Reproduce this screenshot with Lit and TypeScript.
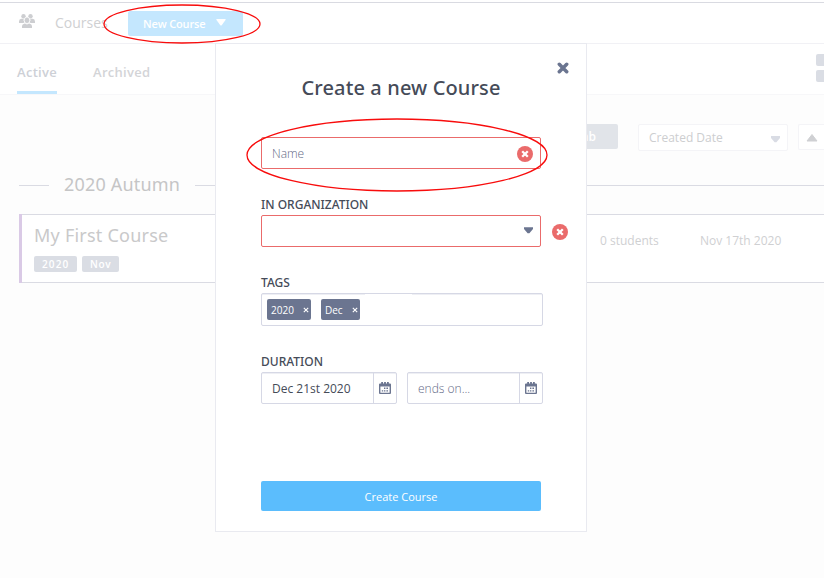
import { LitElement, html, css, svg } from "lit";
import { customElement } from "lit/decorators.js";

const cross = svg`<path d="M2.3 2.3L9.7 9.7M9.7 2.3L2.3 9.7" stroke="currentColor" stroke-width="3.5" stroke-linecap="round" fill="none"/>`;

@customElement("error-badge")
class ErrorBadge extends LitElement {
  static styles = css`
    :host { display: block; width: 16px; height: 16px; flex: none; }
    svg { display: block; }
  `;
  render() {
    return html`<svg width="16" height="16" viewBox="0 0 16 16">
      <circle cx="8" cy="8" r="8" fill="#ea6b6b" />
      <path d="M5.2 5.2L10.8 10.8M10.8 5.2L5.2 10.8" stroke="#fff" stroke-width="2.3" stroke-linecap="butt" />
    </svg>`;
  }
}

@customElement("calendar-icon")
class CalendarIcon extends LitElement {
  static styles = css`
    :host { display: block; width: 12px; height: 12px; }
    svg { display: block; }
  `;
  render() {
    return html`<svg width="12" height="12" viewBox="0 0 12 12">
      <path fill="#6b7590" fill-rule="evenodd" d="M1 1.5H2.2V0H4V1.5H5.1V0H6.9V1.5H8V0H9.8V1.5H11Q12 1.5 12 2.5V11Q12 12 11 12H1Q0 12 0 11V2.5Q0 1.5 1 1.5ZM1.4 4.6V10.7H10.6V4.6Z" />
      <path fill="#6b7590" d="M5 5.6H6.4V7H5ZM7.4 5.6H9V7H7.4ZM2.8 8.2H4.2V9.6H2.8ZM5 8.2H6.4V9.6H5ZM7.4 8.2H9V9.6H7.4Z" />
    </svg>`;
  }
}

@customElement("course-dialog")
class CourseDialog extends LitElement {
  static styles = css`
    :host {
      display: block; box-sizing: border-box; width: 372px; height: 489px;
      background: #fff; border: 1px solid #e9eaf0; padding: 0 45px;
      color: #454b58; font-family: "Open Sans", sans-serif;
    }
    .close { position: absolute; right: 17px; top: 18px; color: #6b7590; }
    .close svg { display: block; }
    h1 { margin: 0; padding-top: 29px; height: 64px; text-align: center; letter-spacing: .12px;
      font: 500 20px/30px "Noto Sans", sans-serif; color: #454b58; width: 280px; }
    .field { box-sizing: border-box; display: flex; flex: none; align-items: center; height: 32px; width: 280px;
      border: 1px solid #ea6b6b; border-radius: 2px; background: #fff; padding: 0 7px 0 10px; justify-content: space-between; }
    .ph { font-size: 12px; font-weight: 300; color: #5f6986; }
    .field .ph { padding-top: 1px; }
    .field error-badge { margin-top: 2px; }
    .label { font: 500 12px/16px "Noto Sans", sans-serif; height: 18px; color: #454b58; }
    .org { margin-top: 28px; }
    .row { display: flex; align-items: center; gap: 11px; }
    .row error-badge { margin-top: 2px; }
    .select { justify-content: flex-end; }
    .select svg { margin-top: -2px; }
    .tags { margin-top: 28px; }
    .taglist { position: relative; box-sizing: border-box; width: 282px; height: 33px; border: 1px solid #d6d8e5; border-radius: 2px;
      display: flex; align-items: center; gap: 10px; padding-left: 5px; box-shadow: inset 0 1px 0 #eeeff4; }
    .taglist::after { content: ""; position: absolute; left: 103px; top: 0; width: 47px; height: 1px; background: #fff; }
    .tag { box-sizing: border-box; display: flex; justify-content: space-between; align-items: center; height: 21px;
      padding: 0 2px 0 4px; border-radius: 2px; background: #6b7590; color: #fff; font-size: 10px; font-weight: 500; width: 44px; }
    .tag span { padding-top: 1px; }
    .tag.short { width: 39px; }
    .tag svg { display: block; }
    .duration { margin-top: 28px; }
    .dates { display: flex; gap: 10px; }
    .date { box-sizing: border-box; flex: none; width: 136px; height: 32px; display: flex; border: 1px solid #d6d8e5; border-radius: 2px; box-shadow: inset 0 1px 0 #eeeff4; }
    .value { flex: 1; padding-left: 10px; line-height: 31px; font-size: 12px; color: #454b58; }
    .value.ph { font-weight: 300; color: #5f6986; }
    .cal { width: 22px; border-left: 1px solid #d6d8e5; display: flex; justify-content: center; align-items: center; }
    .submit { margin-top: 77px; width: 280px; height: 30px; line-height: 31px; border-radius: 2px; background: #5bbdfd;
      color: #fff; text-align: center; font-size: 11px; font-weight: 500; }
  `;
  render() {
    const x = svg`<path d="M.8 .8L5.2 5.2M5.2 .8L.8 5.2" stroke="#fff" stroke-width="1.1"/>`;
    return html`
      <div class="close"><svg width="12" height="12" viewBox="0 0 12 12">${cross}</svg></div>
      <h1>Create a new Course</h1>
      <div class="field"><span class="ph">Name</span><error-badge></error-badge></div>
      <div class="label org">IN ORGANIZATION</div>
      <div class="row">
        <div class="field select"><svg width="9" height="7" viewBox="0 0 9 7"><path d="M0 .3H9V2L5.4 6.3H3.6L0 2Z" fill="#6b7590"/></svg></div>
        <error-badge></error-badge>
      </div>
      <div class="label tags">TAGS</div>
      <div class="taglist">
        <div class="tag"><span>2020</span><svg width="6" height="6">${x}</svg></div>
        <div class="tag short"><span>Dec</span><svg width="6" height="6">${x}</svg></div>
      </div>
      <div class="label duration">DURATION</div>
      <div class="dates">
        <div class="date"><span class="value">Dec 21st 2020</span><span class="cal"><calendar-icon></calendar-icon></span></div>
        <div class="date"><span class="value ph">ends on...</span><span class="cal"><calendar-icon></calendar-icon></span></div>
      </div>
      <div class="submit">Create Course</div>
    `;
  }
}

@customElement("app-root")
class AppRoot extends LitElement {
  static styles = css`
    :host { display: block; position: relative; width: 824px; height: 578px; overflow: hidden; background: #fdfdfd;
      font-family: "Open Sans", sans-serif; color: #c9cacd; }
    * { box-sizing: border-box; }
    .strip { height: 3px; border-bottom: 1px solid #d9dae1; background: #fff; }
    .top { height: 41px; background: #fff; border-bottom: 1px solid #f1f1f5; display: flex; align-items: flex-start; padding: 0 0 0 19px; }
    .people { margin-top: 11px; display: block; }
    .crumb { margin: 9px 0 0 20px; width: 73px; font-size: 14px; line-height: 22px; color: #cfd0d2; white-space: nowrap; }
    .new { margin-top: 8px; width: 115px; height: 25px; border-radius: 2px; background: #c4e7fe; color: #fff;
      display: flex; padding-left: 15px; gap: 11px; font-size: 11px; font-weight: 600; line-height: 26px; }
    .new span { width: 62px; letter-spacing: -.15px; white-space: nowrap; }
    .new svg { margin-top: 8px; }
    .tabs { height: 51px; background: #fff; border-bottom: 1px solid #f7f7f9; display: flex; padding-left: 17px; gap: 36px;
      font: 600 13px/56px "Open Sans", sans-serif; color: #d3d4d7; letter-spacing: .3px; }
    .tab { height: 50px; }
    .tab.on { width: 40px; border-bottom: 3px solid #c4e7fe; color: #cdd0d6; }
    .grid { margin: 10px 0 0 auto; width: 8px; display: grid; gap: 4px; align-content: start; }
    .grid i { height: 12px; background: #dadde4; border-radius: 2px 0 0 2px; }
    .filters { height: 56px; padding-top: 29px; display: flex; justify-content: flex-end; align-items: flex-start; }
    .lab { width: 100px; height: 25px; margin-right: 20px; border-radius: 2px; background: #e1e4e9; color: #fff; font-size: 12px; font-weight: 600; line-height: 26px; padding-right: 22px; text-align: right; }
    .sort { width: 150px; height: 27px; border: 1px solid #f4f4f7; border-radius: 2px; background: #fff; display: flex; justify-content: space-between;
      padding: 0 7px 0 10px; align-items: center; font-size: 12px; color: #cdced0; margin-right: 10px; }
    .sort svg { margin-top: 3px; }
    .dir { width: 26px; height: 26px; border: 1px solid #f4f4f7; border-right: 0; background: #fff; padding: 9px 0 0 7px; border-radius: 2px 0 0 2px; }
    .dir svg { display: block; }
    .term { display: flex; align-items: center; height: 26px; margin-top: 21px; padding-left: 19px; gap: 15px;
      font: 400 18px/26px "Noto Sans", sans-serif; color: #c5c5c6; letter-spacing: .18px; }
    .term span { padding-bottom: 2px; line-height: 24px; }
    .term::before { content: ""; width: 30px; height: 1px; background: #dadbe3; }
    .term::after { content: ""; flex: 1; height: 1px; background: #dadbe3; }
    .card { margin: 16px 0 0 19px; height: 69px; background: #fff; border: solid #dadbe3; border-width: 1px 0; display: flex; }
    .card::before { content: ""; width: 3px; flex: none; background: #dacae6; margin: -1px 0; }
    .info { width: 578px; padding: 7px 0 0 12px; }
    .name { font: 400 18px/26px "Noto Sans", sans-serif; color: #c9c9ca; letter-spacing: .23px; }
    .chips { display: flex; gap: 5px; margin-top: 8px; }
    .chip { height: 16px; width: 43px; padding-left: 8px; background: #dadde4; color: #fff; border-radius: 2px; font-size: 10px; line-height: 17px; font-weight: 600; letter-spacing: 1.1px; }
    .chip.month { width: 37px; letter-spacing: .6px; }
    .meta { font-size: 12px; line-height: 18px; margin-top: 17px; width: 100px; color: #cfd0d2; white-space: nowrap; }
    course-dialog { position: absolute; left: 215px; top: 43px; }
    .marks { position: absolute; left: 0; top: 0; }
  `;
  render() {
    return html`
      <div class="strip"></div>
      <div class="top">
        <svg class="people" width="16" height="14" viewBox="0 0 16 14" fill="#cdced1">
          <circle cx="4.5" cy="2.2" r="2.2"/><circle cx="11.5" cy="2.2" r="2.2"/>
          <path d="M0 9V7.4Q0 5 2.4 4.8H4.6Q4.4 7 5.6 8.3L4.3 9ZM16 9V7.4Q16 5 13.6 4.8H11.4Q11.6 7 10.4 8.3L11.7 9Z"/>
          <ellipse cx="8" cy="6.3" rx="2.8" ry="3.3" stroke="#fff" stroke-width=".8"/>
          <path d="M3 14V12Q3 10 5.8 9.4L8 10.4L10.2 9.4Q13 10 13 12V14Z"/>
        </svg>
        <div class="crumb">Courses</div>
        <div class="new"><span>New Course</span><svg width="10" height="8"><path d="M.6 0H9.4Q10 .3 9.5 1L5.7 6.2Q5 7 4.3 6.2L.5 1Q0 .3 .6 0Z" fill="#fff"/></svg></div>
      </div>
      <div class="tabs">
        <div class="tab on">Active</div><div class="tab">Archived</div>
        <div class="grid"><i></i><i></i></div>
      </div>
      <div class="filters">
        <div class="lab">Lab</div>
        <div class="sort"><span>Created Date</span><svg width="9" height="7"><path d="M0 0H9V2L5.4 6.3H3.6L0 2Z" fill="#d9dce4"/></svg></div>
        <div class="dir"><svg width="12" height="8"><path d="M6 .5L11 7H1Z" fill="#cfd0d3" stroke="#cfd0d3" stroke-width="1" stroke-linejoin="round"/></svg></div>
      </div>
      <div class="term"><span>2020 Autumn</span></div>
      <div class="card">
        <div class="info">
          <div class="name">My First Course</div>
          <div class="chips"><span class="chip">2020</span><span class="chip month">Nov</span></div>
        </div>
        <div class="meta">0 students</div>
        <div class="meta">Nov 17th 2020</div>
      </div>
      <course-dialog></course-dialog>
      <svg class="marks" width="824" height="578" fill="none" stroke="#f80c0c" stroke-width="1.3">
        <ellipse cx="182" cy="24" rx="78" ry="19"/>
        <ellipse cx="397" cy="155" rx="150" ry="36"/>
      </svg>
    `;
  }
}
